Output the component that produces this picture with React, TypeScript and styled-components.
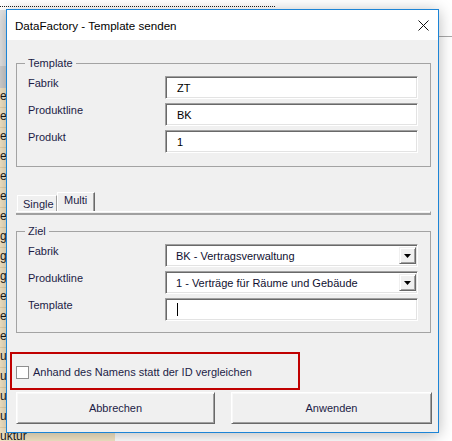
import React from 'react';
import styled, { createGlobalStyle } from 'styled-components';

const GlobalStyle = createGlobalStyle`
  html, body {
    margin: 0;
    padding: 0;
    background: #ffffff;
  }
  body {
    font-family: "Liberation Sans", Arial, sans-serif;
    font-size: 11px;
  }
  * {
    box-sizing: border-box;
  }
`;

const sheetRows = ['e', 'e', 'e', 'e', 'e', 'e', 'e', 'g', 'g', 'g', 'er', 'er', 'er', 'u', 'u', 'u', 'u', 'uktur'];

const Desktop = styled.div`
  position: relative;
  width: 452px;
  height: 441px;
  overflow: hidden;
  background: #ffffff;
`;

const Sheet = styled.div`
  display: flex;
  flex-direction: column;
  padding-top: 6px;
`;

const DottedRule = styled.div`
  width: 275px;
  height: 4px;
  border-top: 1px dotted #222;
`;

const Band = styled.div<{ $tone: string; $h: number }>`
  width: 120px;
  height: ${(p) => p.$h}px;
  background: ${(p) => p.$tone};
`;

const Cell = styled.div`
  width: 115px;
  height: 20px;
  line-height: 17px;
  background: #f4e6c6;
  border-bottom: 1px solid #e4d4ae;
  color: #1a1a1a;
  font-size: 12px;
  font-family: "Liberation Sans", Arial, sans-serif;
`;

const GridLine = styled.div`
  position: absolute;
  left: 439px;
  top: 36px;
  width: 20px;
  border-top: 1px solid #a8a8a8;
`;

const Dialog = styled.div`
  position: absolute;
  left: 6px;
  top: 9px;
  width: 433px;
  height: 424px;
  border: 1px solid #1c84d6;
  display: flex;
  flex-direction: column;
  box-shadow: 0 2px 14px rgba(0, 0, 0, 0.28);
`;

const TitleBar = styled.div`
  height: 30px;
  background: #ffffff;
  display: flex;
  align-items: center;
  justify-content: space-between;
  padding-left: 8px;
`;

const Title = styled.span`
  font-family: "Liberation Sans", Arial, sans-serif;
  font-size: 11.6px;
  color: #000;
`;

const CloseBox = styled.div`
  width: 30px;
  height: 30px;
  display: flex;
  align-items: center;
  justify-content: center;
`;

const Body = styled.div`
  flex: 1;
  background: #f0f0f0;
  display: flex;
  flex-direction: column;
  padding: 16px 0 0 9px;
  color: #1c1c46;
`;

const Frame = styled.fieldset<{ $bottom: number }>`
  width: 415px;
  margin: 0;
  padding: 6px 12px ${(p) => p.$bottom}px 11px;
  border: 1px solid #a3a3a3;
  min-width: 0;
`;

const Legend = styled.legend`
  font-size: 11px;
  line-height: 14px;
  padding: 0 3px;
  margin-left: -3px;
  color: #1c1c46;
`;

const FieldGrid = styled.div`
  display: grid;
  grid-template-columns: 137px 253px;
  grid-auto-rows: 23px;
  row-gap: 4px;
`;

const Label = styled.div`
  line-height: 14px;
  font-size: 11px;
`;

const sunken = `
  border: 1px solid;
  border-color: #a0a0a0 #ffffff #ffffff #a0a0a0;
  box-shadow: inset 1px 1px #696969, inset -1px -1px #e3e3e3;
  background: #ffffff;
`;

const TextBox = styled.div`
  ${sunken}
  display: flex;
  align-items: center;
  padding-left: 11px;
  color: #000;
  font-size: 11px;
`;

const Caret = styled.span`
  width: 1px;
  height: 13px;
  background: #000;
`;

const Combo = styled.div`
  ${sunken}
  display: flex;
  align-items: stretch;
  padding: 2px 1px 2px 10px;
  color: #101030;
  font-size: 11px;
`;

const ComboText = styled.span`
  flex: 1;
  display: flex;
  align-items: center;
`;

const DropButton = styled.div`
  width: 17px;
  background: #f0f0f0;
  border: 1px solid;
  border-color: #f0f0f0 #696969 #696969 #f0f0f0;
  box-shadow: inset 1px 1px #ffffff, inset -1px -1px #a0a0a0;
  display: flex;
  align-items: center;
  justify-content: center;
`;

const TabRow = styled.div`
  display: flex;
  align-items: flex-end;
  margin-top: 25px;
  padding-left: 1px;
  height: 19px;
`;

const Tab = styled.div<{ $active?: boolean }>`
  height: ${(p) => (p.$active ? 19 : 16)}px;
  padding: ${(p) => (p.$active ? '1px 6px 0 6px' : '2px 6px 0 5px')};
  border-top: 1px solid #ffffff;
  border-left: 1px solid #ffffff;
  border-right: 1px solid ${(p) => (p.$active ? '#696969' : '#a0a0a0')};
  box-shadow: ${(p) => (p.$active ? 'inset -1px 0 #a0a0a0' : 'none')};
  font-size: 11px;
  line-height: 13px;
  width: ${(p) => (p.$active ? 38 : 40)}px;
`;

const TabPage = styled.div`
  width: 415px;
  height: 4px;
  border-top: 1px solid #ffffff;
  border-bottom: 2px solid #a0a0a0;
  border-right: 1px solid #a0a0a0;
  margin-bottom: 9px;
`;

const Highlight = styled.div`
  width: 290px;
  height: 38px;
  margin: 19px 0 0 -6px;
  border: 2px solid #c00000;
  display: flex;
  align-items: center;
  gap: 4px;
  padding: 2px 0 0 4px;
`;

const CheckBox = styled.span`
  width: 13px;
  height: 13px;
  background: #fff;
  border: 1px solid #8f8f8f;
`;

const ButtonRow = styled.div`
  display: flex;
  gap: 16px;
  margin-top: 2px;
`;

const Button = styled.div<{ $w: number }>`
  width: ${(p) => p.$w}px;
  height: 32px;
  background: #f0f0f0;
  border: 1px solid;
  border-color: #ffffff #696969 #696969 #ffffff;
  box-shadow: inset 1px 1px #f8f8f8, inset -1px -1px #a0a0a0;
  display: flex;
  align-items: center;
  justify-content: center;
  font-size: 11px;
`;

const Arrow = () => (
  <svg width="7" height="4" viewBox="0 0 7 4">
    <polygon points="0,0 7,0 3.5,4" fill="#000" />
  </svg>
);

export default function App() {
  return (
    <>
      <GlobalStyle />
      <Desktop>
        <Sheet>
          <DottedRule />
          <Band $tone="#e4e4e4" $h={56} />
          <Band $tone="#d0d0d0" $h={22} />
          {sheetRows.map((t, i) => (
            <Cell key={i}>{t}</Cell>
          ))}
        </Sheet>
        <GridLine />
        <Dialog>
          <TitleBar>
            <Title>DataFactory - Template senden</Title>
            <CloseBox>
              <svg width="11" height="11" viewBox="0 0 11 11">
                <path d="M0.5 0.5 L10.5 10.5 M10.5 0.5 L0.5 10.5" stroke="#111" strokeWidth="1" />
              </svg>
            </CloseBox>
          </TitleBar>
          <Body>
            <Frame $bottom={13}>
              <Legend>Template</Legend>
              <FieldGrid>
                <Label>Fabrik</Label>
                <TextBox>ZT</TextBox>
                <Label>Produktline</Label>
                <TextBox>BK</TextBox>
                <Label>Produkt</Label>
                <TextBox>1</TextBox>
              </FieldGrid>
            </Frame>
            <TabRow>
              <Tab>Single</Tab>
              <Tab $active>Multi</Tab>
            </TabRow>
            <TabPage />
            <Frame $bottom={11}>
              <Legend>Ziel</Legend>
              <FieldGrid>
                <Label>Fabrik</Label>
                <Combo>
                  <ComboText>BK - Vertragsverwaltung</ComboText>
                  <DropButton>
                    <Arrow />
                  </DropButton>
                </Combo>
                <Label>Produktline</Label>
                <Combo>
                  <ComboText>1 - Verträge für Räume und Gebäude</ComboText>
                  <DropButton>
                    <Arrow />
                  </DropButton>
                </Combo>
                <Label>Template</Label>
                <TextBox>
                  <Caret />
                </TextBox>
              </FieldGrid>
            </Frame>
            <Highlight>
              <CheckBox />
              <span>Anhand des Namens statt der ID vergleichen</span>
            </Highlight>
            <ButtonRow>
              <Button $w={199}>Abbrechen</Button>
              <Button $w={201}>Anwenden</Button>
            </ButtonRow>
          </Body>
        </Dialog>
      </Desktop>
    </>
  );
}
